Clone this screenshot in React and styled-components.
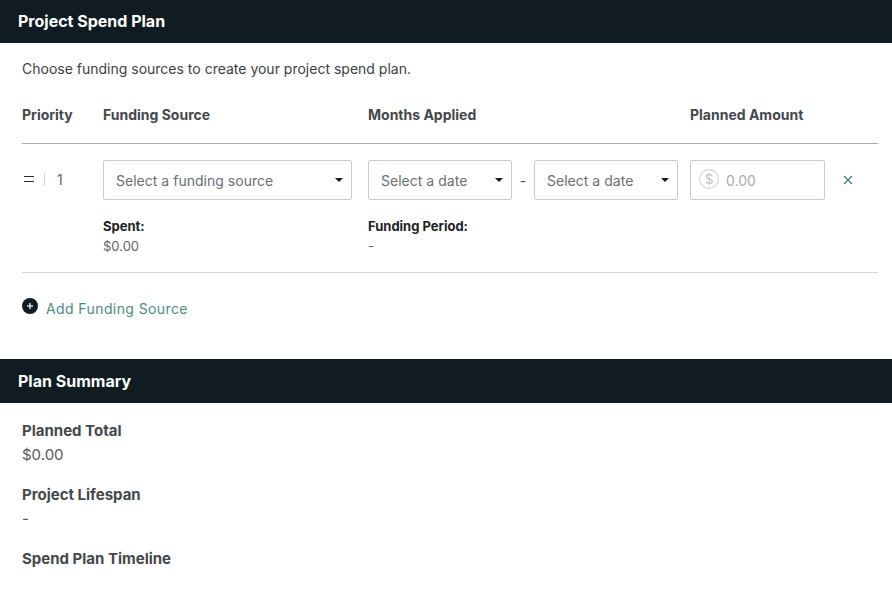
import React from "react";
import styled, { createGlobalStyle } from "styled-components";

const Global = createGlobalStyle`
  html, body { margin: 0; padding: 0; background: #fff; }
  body { font-family: Inter, "Liberation Sans", sans-serif; color: #3f4245; overflow: hidden; }
`;

const Page = styled.div`
  width: 892px;
  height: 599px;
  display: flex;
  flex-direction: column;
`;

const Banner = styled.h2`
  box-sizing: border-box;
  margin: 0;
  height: ${(p) => p.$h}px;
  padding: 0 0 ${(p) => p.$nudge || 0}px 18px;
  display: flex;
  align-items: center;
  flex: none;
  background: #101c22;
  color: #fff;
  font-size: 16px;
  font-weight: 700;
`;

const Section = styled.section`
  padding: 0 14px 0 22px;
`;

const Intro = styled.p`
  margin: 0;
  padding-top: 17px;
  height: 18px;
  font-size: 14px;
  line-height: 18px;
  color: #3a3f42;
`;

const Grid = styled.div`
  display: grid;
  grid-template-columns: 81px 265px 322px 188px;
`;

const HeadRow = styled(Grid)`
  margin-top: 28px;
  height: 37px;
  border-bottom: 1px solid #a9abac;
  font-size: 14px;
  font-weight: 700;
  line-height: 18px;
  color: #45484a;
`;

const BodyRow = styled(Grid)`
  padding-top: 16px;
  height: 112px;
  border-bottom: 1px solid #d2d4d5;
  align-content: start;
`;

const PriorityCell = styled.div`
  display: flex;
  align-items: center;
  height: 38px;
  font-size: 14px;
  color: #5f6d70;
`;

const Grip = styled.span`
  width: 10px;
  height: 4px;
  margin-left: 2px;
  border-top: 1px solid #2a2f32;
  border-bottom: 1px solid #2a2f32;
`;

const Divider = styled.span`
  width: 1px;
  height: 13px;
  margin: 0 12px 0 10px;
  background: #d2d4d5;
`;

const SelectBox = styled.div`
  box-sizing: border-box;
  width: ${(p) => p.$w}px;
  height: 40px;
  padding: 1px 12px 0;
  display: flex;
  align-items: center;
  justify-content: space-between;
  border: 1px solid #c9cbcc;
  border-radius: 2px;
  font-size: 14px;
  letter-spacing: 0.02px;
  color: #6a6f72;
`;

const Caret = styled.span`
  width: 0;
  height: 0;
  margin-top: -2px;
  margin-right: -4px;
  border-left: 4px solid transparent;
  border-right: 4px solid transparent;
  border-top: 4px solid #14191c;
`;

const DateRow = styled.div`
  display: flex;
  align-items: center;
`;

const Dash = styled.span`
  width: 22px;
  text-align: center;
  font-size: 14px;
  color: #45484a;
`;

const AmountRow = styled.div`
  display: flex;
  align-items: center;
  align-self: start;
`;

const AmountBox = styled.div`
  box-sizing: border-box;
  width: 135px;
  height: 40px;
  padding: 1px 0 0 8px;
  display: flex;
  align-items: center;
  gap: 7px;
  border: 1px solid #c9cbcc;
  border-radius: 2px;
  font-size: 14px;
  color: #a9acae;
`;

const DollarIcon = styled.svg`
  width: 20px;
  height: 20px;
  margin-top: -3px;
  flex: none;
`;

const Remove = styled.svg`
  width: 10px;
  height: 10px;
  margin-left: 18px;
  flex: none;
`;

const Meta = styled.div`
  margin-top: 16px;
  font-size: 13px;
  line-height: 20px;
  color: #5f6568;
`;

const MetaLabel = styled.div`
  font-weight: 700;
  color: #1c2225;
`;

const AddRow = styled.div`
  display: flex;
  align-items: center;
  gap: 8px;
  margin-top: 25px;
  height: 20px;
  font-size: 14px;
  letter-spacing: 0.4px;
  color: #4b8c80;
`;

const AddIcon = styled.svg`
  width: 16px;
  height: 16px;
  margin-top: -4px;
  flex: none;
`;

const Spacer = styled.div`
  height: 41px;
  flex: none;
`;

const SummarySection = styled(Section)`
  padding-top: 18px;
`;

const SummaryLabel = styled.div`
  font-size: 15px;
  font-weight: 700;
  line-height: 20px;
  color: #45484a;
`;

const SummaryValue = styled.div`
  margin-top: 4px;
  height: 20px;
  margin-bottom: 20px;
  font-size: 15px;
  line-height: 20px;
  color: #55595c;
`;

const DateSelect = () => (
  <SelectBox $w={144}>
    Select a date
    <Caret />
  </SelectBox>
);

export default function App() {
  return (
    <Page>
      <Global />
      <Banner $h={43} $nudge={1}>Project Spend Plan</Banner>
      <Section>
        <Intro>Choose funding sources to create your project spend plan.</Intro>
        <HeadRow>
          <div>Priority</div>
          <div>Funding Source</div>
          <div>Months Applied</div>
          <div>Planned Amount</div>
        </HeadRow>
        <BodyRow>
          <PriorityCell>
            <Grip />
            <Divider />1
          </PriorityCell>
          <div>
            <SelectBox $w={249}>
              Select a funding source
              <Caret />
            </SelectBox>
            <Meta>
              <MetaLabel>Spent:</MetaLabel>
              $0.00
            </Meta>
          </div>
          <div>
            <DateRow>
              <DateSelect />
              <Dash>-</Dash>
              <DateSelect />
            </DateRow>
            <Meta>
              <MetaLabel>Funding Period:</MetaLabel>-
            </Meta>
          </div>
          <AmountRow>
            <AmountBox>
              <DollarIcon viewBox="0 0 20 20" fill="none">
                <circle cx="10" cy="10" r="9.4" stroke="#d0d2d3" strokeWidth="1.1" />
                <text x="10" y="15" textAnchor="middle" fontSize="13.5" fontFamily="Inter, sans-serif" fill="#bcbfc1">$</text>
              </DollarIcon>
              0.00
            </AmountBox>
            <Remove viewBox="0 0 10 10" fill="none">
              <path d="M1 1l8 8M9 1L1 9" stroke="#2f7f74" strokeWidth="1.1" />
            </Remove>
          </AmountRow>
        </BodyRow>
        <AddRow>
          <AddIcon viewBox="0 0 16 16">
            <circle cx="8" cy="8" r="8" fill="#101c22" />
            <path d="M8 5v6M5 8h6" stroke="#d8dadb" strokeWidth="1.6" />
          </AddIcon>
          Add Funding Source
        </AddRow>
      </Section>
      <Spacer />
      <Banner $h={44}>Plan Summary</Banner>
      <SummarySection>
        <SummaryLabel>Planned Total</SummaryLabel>
        <SummaryValue>$0.00</SummaryValue>
        <SummaryLabel>Project Lifespan</SummaryLabel>
        <SummaryValue>-</SummaryValue>
        <SummaryLabel>Spend Plan Timeline</SummaryLabel>
      </SummarySection>
    </Page>
  );
}
